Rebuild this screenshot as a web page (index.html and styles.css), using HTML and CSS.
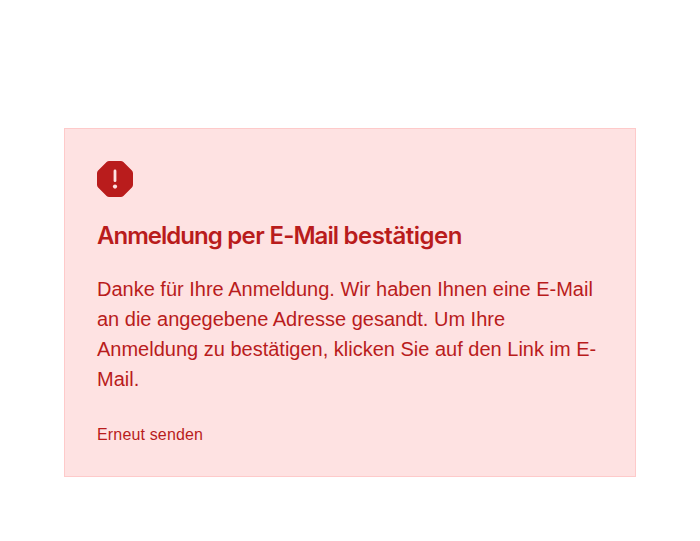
FILE: index.html
```html
<!DOCTYPE html>
<html lang="de">
<head>
<meta charset="utf-8">
<title>Anmeldung</title>
<link rel="stylesheet" href="styles.css">
</head>
<body>
<section class="alert">
<svg class="alert-icon" viewBox="0 0 36 36" aria-hidden="true"><path fill="#b91c1c" d="M12.2 0H23.8Q25.3 0 26.4 1.1L34.9 9.6Q36 10.7 36 12.2V23.8Q36 25.3 34.9 26.4L26.4 34.9Q25.3 36 23.8 36H12.2Q10.7 36 9.6 34.9L1.1 26.4Q0 25.3 0 23.8V12.2Q0 10.7 1.1 9.6L9.6 1.1Q10.7 0 12.2 0Z"/><path d="M18 9.9V19.7" stroke="#fee2e2" stroke-width="2.8" stroke-linecap="round"/><circle cx="18" cy="25.6" r="2.1" fill="#fee2e2"/></svg>
<h1 class="alert-title"><span class="tight">Anmeldung</span> per <span class="mail">E-Mail</span> <span class="loose">bestätigen</span></h1>
<p class="alert-text">Danke für Ihre Anmeldung. Wir haben Ihnen eine E-Mail an die angegebene Adresse gesandt. Um Ihre Anmeldung zu bestätigen, klicken Sie auf den Link im E-Mail.</p>
<a class="alert-link">Erneut senden</a>
</section>
</body>
</html>
```
FILE: styles.css
```css
body {
  margin: 0;
  padding: 128px 64px 64px;
  background: #fff;
  font-family: "Liberation Sans", Arial, sans-serif;
}
.alert {
  box-sizing: border-box;
  height: 349px;
  padding: 32px;
  border: 1px solid #fecaca;
  background: #fee2e2;
  color: #b91c1c;
}
.alert-icon {
  display: block;
  width: 36px;
  height: 36px;
}
.alert-title {
  margin: 21px 0 20px;
  font-family: Inter, sans-serif;
  font-size: 24px;
  line-height: 36px;
  font-weight: 600;
  letter-spacing: -0.6px;
}
.tight {
  letter-spacing: -0.98px;
}
.mail {
  font-feature-settings: "calt" 0;
  letter-spacing: -0.95px;
}
.loose {
  letter-spacing: -0.5px;
}
.alert-text {
  margin: 0 0 29px;
  font-size: 20px;
  line-height: 30px;
}
.alert-link {
  display: block;
  font-size: 16px;
  line-height: 24px;
  letter-spacing: 0.16px;
}
```
